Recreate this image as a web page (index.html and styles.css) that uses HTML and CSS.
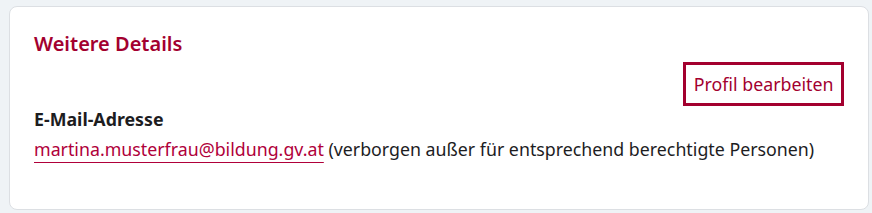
FILE: index.html
```html
<!DOCTYPE html>
<html lang="de">
<head>
    <meta charset="UTF-8">
    <title>Weitere Details</title>
    <link rel="stylesheet" href="styles.css">
</head>
<body>
<div class="card">
    <h2 class="card-title">Weitere Details</h2>
    <div class="actions">
        <a href="" class="btn-outline">Profil bearbeiten</a>
    </div>
    <div class="field">
        <div class="field-label">E-Mail-Adresse</div>
        <div class="field-value">
            <a href="" class="mail">martina.musterfrau@bildung.gv.at</a> (verborgen außer für entsprechend berechtigte Personen)
        </div>
    </div>
</div>
</body>
</html>
```

FILE: styles.css
```css
* {
    padding: 0;
    margin: 0;
    box-sizing: border-box;
}
body {
    background-color: #eff3f6;
    font-family: "Noto Sans", sans-serif;
    color: #1d1d1f;
    padding: 6px 3px 3px 9px;
}
a {
    text-decoration: none;
    color: inherit;
}
.card {
    background-color: #fff;
    border: 1px solid #dcdfe3;
    border-radius: 8px;
    padding: 24px 24px 47px 24px;
}
.card-title {
    font-size: 20px;
    font-weight: 600;
    color: #a3002f;
    line-height: 26px;
}
.actions {
    display: flex;
    justify-content: flex-end;
    margin-top: 5px;
}
.btn-outline {
    display: block;
    border: 3px solid #a3002f;
    color: #a3002f;
    font-size: 17.8px;
    line-height: 24px;
    padding: 7px 7.5px;
}
.field-label {
    font-weight: 700;
    font-size: 17.8px;
    line-height: 26px;
}
.field-value {
    font-size: 17.8px;
    line-height: 26px;
    margin-top: 4px;
}
.mail {
    color: #b0003a;
    text-decoration: underline;
    text-decoration-thickness: 1px;
    text-underline-offset: 6px;
}
```
